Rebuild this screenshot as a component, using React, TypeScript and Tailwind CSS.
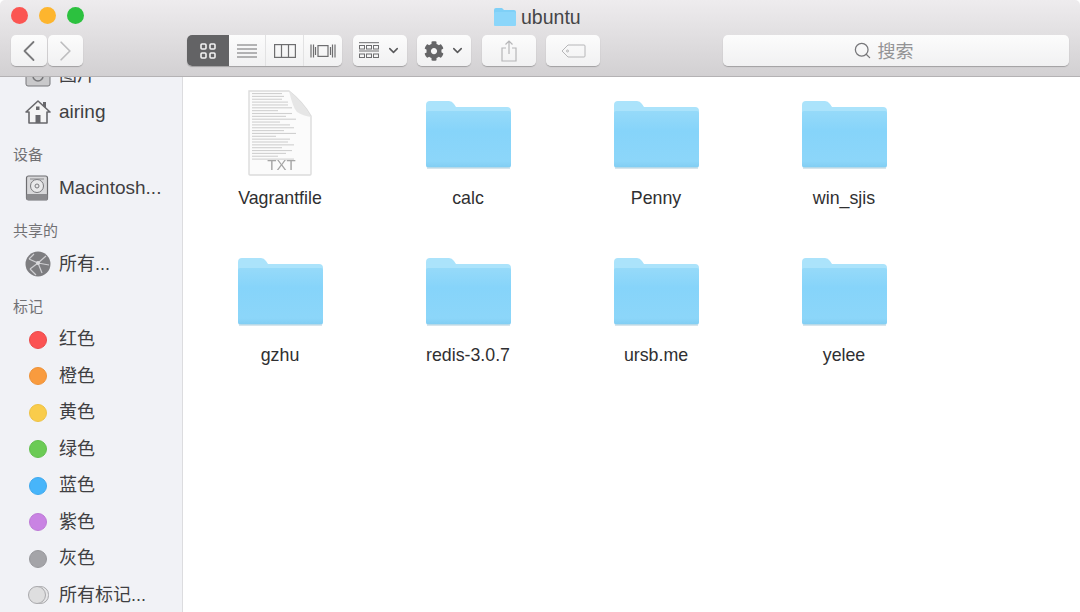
import { ChevronDown, ChevronLeft, ChevronRight, Search } from 'lucide-react';
import { FaCog } from 'react-icons/fa';

const tags = [
  { name: '红色', color: 'bg-[#fb5353]', ring: 'border-[#ea4a4a]' },
  { name: '橙色', color: 'bg-[#f99b3e]', ring: 'border-[#ee9238]' },
  { name: '黄色', color: 'bg-[#f9cc4b]', ring: 'border-[#eec244]' },
  { name: '绿色', color: 'bg-[#6bcb55]', ring: 'border-[#62bf4e]' },
  { name: '蓝色', color: 'bg-[#47b5fa]', ring: 'border-[#40a9ee]' },
  { name: '紫色', color: 'bg-[#c983e3]', ring: 'border-[#bd7ad6]' },
  { name: '灰色', color: 'bg-[#a4a4a8]', ring: 'border-[#98989c]' },
];

const files = ['Vagrantfile', 'calc', 'Penny', 'win_sjis', 'gzhu', 'redis-3.0.7', 'ursb.me', 'yelee'];

const Folder = ({ className }: { className: string }) => (
  <svg viewBox="0 0 85 68" className={className}>
    <defs>
      <linearGradient id="folderBody" x1="0" y1="0" x2="0" y2="1">
        <stop offset="0" stopColor="#96daf9" />
        <stop offset="0.35" stopColor="#86d4fa" />
        <stop offset="0.88" stopColor="#8cd6f9" />
        <stop offset="1" stopColor="#80ccf2" />
      </linearGradient>
    </defs>
    <path d="M0 4 Q0 0 4 0 H23 Q26 0 28 3 L30 6 H81 Q85 6 85 10 V20 H0 Z" fill="#abe3fb" />
    <path d="M0 12 Q0 10 2 10 H83 Q85 10 85 12 V64 Q85 67 82 67 H3 Q0 67 0 64 Z" fill="url(#folderBody)" />
    <path d="M1 67 H84" stroke="#c9dce6" strokeWidth="1.4" />
  </svg>
);

const TextFile = () => {
  const lines = [38, 44, 30, 42, 36, 44, 26, 40, 34, 44, 28, 38, 42, 32, 44, 24, 38, 36, 42, 30, 40, 34, 26, 42];
  return (
    <div className="relative w-[66px] h-[86px] -mt-[3px] blur-[0.5px]">
      <svg viewBox="0 0 66 86" className="absolute inset-0 w-full h-full">
        <path d="M2 1 H42 Q56 12 64 26 V84 Q64 85 63 85 H3 Q2 85 2 84 Z" fill="#fbfbfb" stroke="#dcdcdc" strokeWidth="1.4" />
        {lines.map((w, i) => (
          <rect
            key={i}
            x="5"
            y={3 + i * 2.85}
            width={i < 8 ? Math.min(w, 30 + i * 2) : w}
            height="1.1"
            fill="#d0d0d0"
          />
        ))}
        <path d="M42 1 Q46 18 50 22 Q56 26 64 27 Q56 12 42 1 Z" fill="#e6e6e6" />
      </svg>
      <div className="absolute left-0 right-0 bottom-[3px] text-center text-[15px] leading-4 text-[#a6a6a6] pl-[3px]">TXT</div>
    </div>
  );
};

const HomeIcon = () => (
  <svg viewBox="0 0 26 26" className="w-[26px] h-[26px]">
    <path d="M18 3 H21 V9 H18 Z" fill="#68686c" />
    <path d="M13 2 L25 13 H22 V24 H4 V13 H1 Z" fill="#f4f4f4" stroke="#68686c" strokeWidth="1.6" strokeLinejoin="round" />
    <rect x="11" y="7.5" width="3.5" height="3.5" fill="#68686c" />
    <rect x="10.5" y="16" width="5" height="8" fill="#68686c" />
  </svg>
);

const DriveIcon = () => (
  <svg viewBox="0 0 24 26" className="w-[24px] h-[26px]">
    <rect x="1.5" y="1" width="21" height="24" rx="2" fill="#d8d8da" stroke="#6d6d70" strokeWidth="1.2" />
    <rect x="1.5" y="19" width="21" height="6" rx="1" fill="#8b8b8e" />
    <circle cx="12" cy="11" r="6.5" fill="#e9e9ea" stroke="#7a7a7d" />
    <circle cx="12" cy="11" r="2" fill="none" stroke="#7a7a7d" />
    <path d="M5 4 H19" stroke="#8a8a8d" />
  </svg>
);

const NetworkIcon = () => (
  <svg viewBox="0 0 26 26" className="w-[26px] h-[26px]">
    <circle cx="13" cy="13" r="12.5" fill="#7d7d80" />
    <path d="M4 8 L13 12 L21 5 M13 12 L17 22 M13 12 L5 18 M13 12 L24 14 M9 3 L4 8 M5 18 L11 24" stroke="#cfcfd2" strokeWidth="1.2" fill="none" />
    <circle cx="13" cy="12" r="2" fill="#dcdcde" />
  </svg>
);

const Sidebar = () => (
  <aside className="w-[183px] shrink-0 h-full overflow-hidden bg-[#f1f2f6] border-r border-[#dcdcdf] text-[#3f3f42] text-[18px]">
    <div className="flex items-center gap-[8px] h-[37px] -mt-[20px] pl-[25px]">
      <svg viewBox="0 0 26 22" className="w-[26px] h-[22px]">
        <rect x="1" y="1" width="24" height="20" rx="2" fill="#c9c9cb" stroke="#77777a" />
        <circle cx="13" cy="11" r="5" fill="none" stroke="#77777a" strokeWidth="1.5" />
      </svg>
      <span>图片</span>
    </div>
    <div className="flex items-center gap-[8px] h-[36px] pl-[25px]">
      <HomeIcon />
      <span className="text-[19px]">airing</span>
    </div>
    <div className="flex items-end h-[40px] pb-[3px] pl-[13px] text-[15px] leading-[25px] text-[#717174]">设备</div>
    <div className="flex items-center gap-[10px] h-[36px] pl-[25px]">
      <DriveIcon />
      <span className="text-[19px]">Macintosh...</span>
    </div>
    <div className="flex items-end h-[40px] pb-[3px] pl-[13px] text-[15px] leading-[25px] text-[#717174]">共享的</div>
    <div className="flex items-center gap-[8px] h-[36px] pl-[25px]">
      <NetworkIcon />
      <span>所有...</span>
    </div>
    <div className="flex items-end h-[39.5px] pb-[3px] pl-[13px] text-[15px] leading-[25px] text-[#717174]">标记</div>
    <div className="flex flex-col">
      {tags.map((tag) => (
        <div key={tag.name} className="flex items-center gap-[12px] h-[36.5px] pl-[29px]">
          <span className={`w-[18px] h-[18px] rounded-full border ${tag.color} ${tag.ring}`} />
          <span>{tag.name}</span>
        </div>
      ))}
      <div className="flex items-center gap-[10px] h-[36.5px] pl-[28px]">
        <span className="relative w-[21px] h-[18px]">
          <span className="absolute left-[4px] top-0 w-[17px] h-[18px] rounded-full border border-[#a9a9ac] bg-[#e6e6e8]" />
          <span className="absolute left-0 top-0 w-[18px] h-[18px] rounded-full border border-[#a9a9ac] bg-[#dededf]" />
        </span>
        <span>所有标记...</span>
      </div>
    </div>
  </aside>
);

const buttonClass =
  'flex items-center justify-center h-[31px] rounded-[5px] bg-gradient-to-b from-[#fcfcfc] to-[#f1f1f2] shadow-[0_1px_1px_rgba(0,0,0,0.25)]';

const Toolbar = () => (
  <header className="h-[77px] shrink-0 flex flex-col bg-gradient-to-b from-[#eeecee] to-[#d2d0d2] border-b border-[#b4b2b4] rounded-t-[5px]">
    <div className="relative h-[35px] shrink-0 flex items-start">
      <div className="flex gap-[11px] pl-[11px] pt-[7px]">
        <span className="w-[17px] h-[17px] rounded-full bg-[#fb5552]" />
        <span className="w-[17px] h-[17px] rounded-full bg-[#fdb52e]" />
        <span className="w-[17px] h-[17px] rounded-full bg-[#2cc13f]" />
      </div>
      <div className="absolute left-[494px] top-[7px] flex items-center gap-[5px] text-[#454547] text-[19.5px] leading-[20px]">
        <svg viewBox="0 0 22 18" className="w-[22px] h-[18px]">
          <path d="M0 2 Q0 0 2 0 H8 L10 2 H20 Q22 2 22 4 V16 Q22 18 20 18 H2 Q0 18 0 16 Z" fill="#7fd0f7" />
          <rect x="0" y="4" width="22" height="14" rx="1.5" fill="#8bd6fa" />
        </svg>
        <span>ubuntu</span>
      </div>
    </div>
    <div className="flex items-start pl-[11px] pr-[11px]">
      <div className={`${buttonClass} w-[36px] mr-px`}>
        <ChevronLeft size={36} strokeWidth={1.2} className="text-[#7a7a7c]" />
      </div>
      <div className={`${buttonClass} w-[35px] mr-[104px]`}>
        <ChevronRight size={36} strokeWidth={1.2} className="text-[#bdbdbf]" />
      </div>
      <div className={`${buttonClass} w-[155px] overflow-hidden mr-[11px]`}>
        <div className="w-[42px] h-full flex items-center justify-center bg-[#636365]">
          <svg viewBox="0 0 16 16" className="w-[16px] h-[16px]" fill="none" stroke="#f2f2f2" strokeWidth="1.6">
            <rect x="1" y="1" width="5" height="5" rx="1" />
            <rect x="10" y="1" width="5" height="5" rx="1" />
            <rect x="1" y="10" width="5" height="5" rx="1" />
            <rect x="10" y="10" width="5" height="5" rx="1" />
          </svg>
        </div>
        <div className="w-[37px] h-full flex items-center justify-center border-r border-[#e2e2e3]">
          <svg viewBox="0 0 20 14" className="w-[20px] h-[14px]" stroke="#6e6e70" strokeWidth="1.2">
            <path d="M0 1 H20 M0 5 H20 M0 9 H20 M0 13 H20" />
          </svg>
        </div>
        <div className="w-[38px] h-full flex items-center justify-center border-r border-[#e2e2e3]">
          <svg viewBox="0 0 22 14" className="w-[22px] h-[14px]" fill="none" stroke="#6e6e70" strokeWidth="1.2">
            <rect x="0.6" y="0.6" width="20.8" height="12.8" />
            <path d="M7.5 0.6 V13.4 M14.5 0.6 V13.4" />
          </svg>
        </div>
        <div className="flex-1 h-full flex items-center justify-center">
          <svg viewBox="0 0 26 14" className="w-[26px] h-[14px]" fill="none" stroke="#6e6e70" strokeWidth="1.2">
            <rect x="8" y="1.6" width="10" height="10.8" />
            <path d="M1 0.6 V13.4 M3.5 0.6 V13.4 M22.5 0.6 V13.4 M25 0.6 V13.4 M5.5 3 V11 M20.5 3 V11" />
          </svg>
        </div>
      </div>
      <div className={`${buttonClass} w-[54px] gap-[7px] mr-[10px]`}>
        <svg viewBox="0 0 20 18" className="w-[20px] h-[18px]" fill="none" stroke="#6e6e70" strokeWidth="1">
          <path d="M0 0.7 H20 M0 9 H20" />
          <rect x="0.5" y="3.5" width="5" height="3.5" />
          <rect x="7.5" y="3.5" width="5" height="3.5" />
          <rect x="14.5" y="3.5" width="5" height="3.5" />
          <rect x="0.5" y="12" width="5" height="3.5" />
          <rect x="7.5" y="12" width="5" height="3.5" />
          <rect x="14.5" y="12" width="5" height="3.5" />
        </svg>
        <ChevronDown size={15} strokeWidth={2.4} className="text-[#59595b]" />
      </div>
      <div className={`${buttonClass} w-[54px] gap-[6px] mr-[11px]`}>
        <FaCog size={20} className="text-[#656567]" />
        <ChevronDown size={15} strokeWidth={2.4} className="text-[#59595b]" />
      </div>
      <div className={`${buttonClass} w-[54px] mr-[10px]`}>
        <svg viewBox="0 0 16 22" className="w-[16px] h-[22px]" fill="none" stroke="#b6b6b8" strokeWidth="1.2">
          <path d="M5 8 H1 V21 H15 V8 H11 M8 14 V1 M4.5 4.5 L8 1 L11.5 4.5" />
        </svg>
      </div>
      <div className={`${buttonClass} w-[54px] mr-[123px]`}>
        <svg viewBox="0 0 25 14" className="w-[25px] h-[14px]" fill="none" stroke="#b6b6b8" strokeWidth="1">
          <path d="M7 1 H23 Q24 1 24 2 V12 Q24 13 23 13 H7 L1 7 Z" />
          <circle cx="6.5" cy="7" r="1" />
        </svg>
      </div>
      <div className={`${buttonClass} w-[346px] gap-[6px] pr-[26px] text-[#939395] text-[18px]`}>
        <Search size={19} strokeWidth={1.6} className="text-[#77777a]" />
        <span className="pt-[3px]">搜索</span>
      </div>
    </div>
  </header>
);

const App = () => {
  return (
    <div className="w-[1080px] h-[612px] flex flex-col overflow-hidden bg-white font-['Liberation_Sans','Noto_Sans_CJK_SC',sans-serif]">
      <Toolbar />
      <div className="flex flex-1 min-h-0">
        <Sidebar />
        <main className="flex-1 pl-[3px] pt-[6px]">
          <div className="grid grid-cols-[repeat(4,188px)] auto-rows-[157px]">
            {files.map((file, index) => (
              <div key={file} className="flex flex-col items-center">
                <div className="h-[103px] flex items-center justify-center">
                  {index === 0 ? <TextFile /> : <Folder className="w-[85px] h-[68px] blur-[0.4px]" />}
                </div>
                <span className="text-[17.8px] leading-[22px] mt-px text-[#2f2f31]">{file}</span>
              </div>
            ))}
          </div>
        </main>
      </div>
    </div>
  );
};

export default App;
